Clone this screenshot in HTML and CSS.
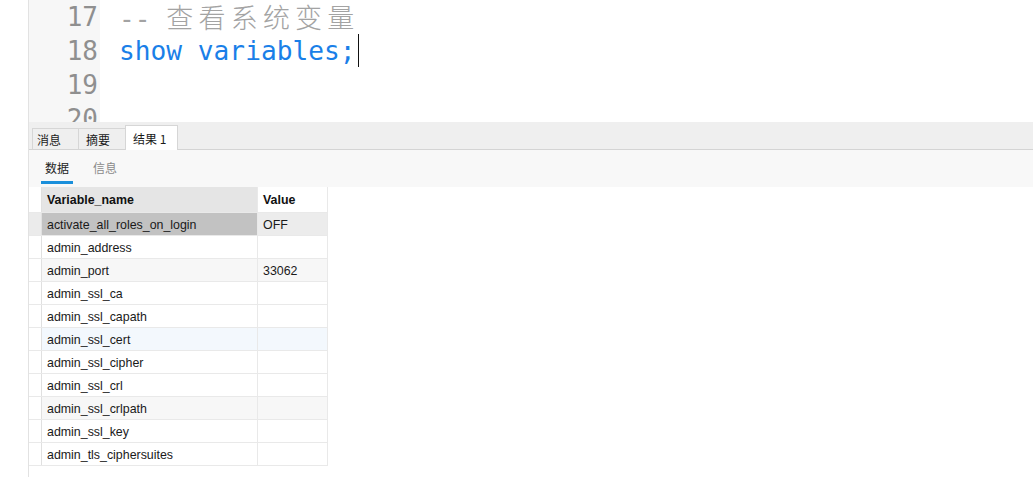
FILE: index.html
```html
<!DOCTYPE html>
<html lang="zh-CN">
<head>
<meta charset="utf-8">
<link rel="stylesheet" href="styles.css">
</head>
<body>
<div class="app">
  <div class="side"></div>
  <div class="main">
    <div class="editor">
      <div class="gutter">
        <div class="ln">17</div>
        <div class="ln">18</div>
        <div class="ln">19</div>
        <div class="ln">20</div>
      </div>
      <div class="code">
        <div class="line comment">-- <span class="cjk">查看系统变量</span></div>
        <div class="line"><span class="kw">show variables;</span><span class="caret"></span></div>
        <div class="line"></div>
        <div class="line"></div>
      </div>
    </div>
    <div class="panel">
      <div class="tabbar">
        <div class="tab t1">消息</div>
        <div class="tab t2">摘要</div>
        <div class="tab active">结果 1</div>
      </div>
      <div class="subtabs">
        <div class="subtab on">数据</div>
        <div class="subtab">信息</div>
      </div>
      <table class="grid">
        <thead>
          <tr><th class="ind"></th><th class="name sel-col">Variable_name</th><th class="val">Value</th></tr>
        </thead>
        <tbody>
          <tr class="cur"><td class="ind"></td><td class="name">activate_all_roles_on_login</td><td class="val">OFF</td></tr>
          <tr><td class="ind"></td><td class="name">admin_address</td><td class="val"></td></tr>
          <tr class="alt"><td class="ind"></td><td class="name">admin_port</td><td class="val">33062</td></tr>
          <tr><td class="ind"></td><td class="name">admin_ssl_ca</td><td class="val"></td></tr>
          <tr><td class="ind"></td><td class="name">admin_ssl_capath</td><td class="val"></td></tr>
          <tr class="hover"><td class="ind"></td><td class="name">admin_ssl_cert</td><td class="val"></td></tr>
          <tr><td class="ind"></td><td class="name">admin_ssl_cipher</td><td class="val"></td></tr>
          <tr><td class="ind"></td><td class="name">admin_ssl_crl</td><td class="val"></td></tr>
          <tr class="alt"><td class="ind"></td><td class="name">admin_ssl_crlpath</td><td class="val"></td></tr>
          <tr><td class="ind"></td><td class="name">admin_ssl_key</td><td class="val"></td></tr>
          <tr><td class="ind"></td><td class="name">admin_tls_ciphersuites</td><td class="val"></td></tr>
        </tbody>
      </table>
    </div>
  </div>
</div>
</body>
</html>
```
FILE: styles.css
```css
html, body {
  margin: 0;
  padding: 0;
  background: #ffffff;
}
body {
  width: 1033px;
  height: 477px;
  overflow: hidden;
  font-family: "Liberation Sans", "Noto Sans CJK SC", sans-serif;
}
.app {
  display: flex;
  height: 477px;
}
.side {
  width: 28px;
  flex: none;
  background: #ffffff;
}
.main {
  flex: 1;
  border-left: 1px solid #e2e2e2;
  display: flex;
  flex-direction: column;
  min-width: 0;
}
.editor {
  height: 122px;
  overflow: hidden;
  display: flex;
  flex: none;
}
.gutter {
  width: 71px;
  flex: none;
  background: #f7f7f7;
  text-align: right;
  box-sizing: border-box;
  padding-right: 2px;
  font-family: "DejaVu Sans Mono", monospace;
  font-size: 26px;
  color: #8f8f8f;
}
.ln, .line {
  height: 34px;
  line-height: 34px;
}
.code {
  flex: 1;
  padding-left: 19px;
  font-family: "DejaVu Sans Mono", "Noto Sans CJK SC", monospace;
  font-size: 26.2px;
}
.line {
  white-space: pre;
}
.comment {
  color: #a3a3a3;
}
.cjk {
  font-family: "Noto Sans CJK SC", sans-serif;
  font-weight: 300;
  font-size: 27px;
  letter-spacing: 5.2px;
}
.kw {
  color: #1a7fe8;
}
.caret {
  display: inline-block;
  width: 1px;
  height: 33px;
  background: #111111;
  vertical-align: top;
  margin-left: 2px;
}
.panel {
  flex: 1;
  display: flex;
  flex-direction: column;
}
.tabbar {
  height: 27px;
  background: #efefef;
  border-bottom: 1px solid #d4d4d4;
  display: flex;
  align-items: flex-end;
  padding-left: 3px;
  flex: none;
}
.tab {
  height: 21px;
  line-height: 21px;
  border: 1px solid #d6d6d6;
  border-bottom: none;
  margin-right: -1px;
  background: #efefef;
  font-size: 12px;
  color: #1a1a1a;
  box-sizing: border-box;
  padding-left: 7px;
  font-family: "Noto Sans CJK SC", sans-serif;
}
.tab.t1 {
  width: 47px;
  padding-left: 4px;
}
.tab.t2 {
  width: 48px;
}
.tab.active {
  background: #ffffff;
  height: 25px;
  line-height: 25px;
  width: 53px;
  margin-bottom: -1px;
  position: relative;
}
.subtabs {
  height: 37px;
  background: #f8f8f8;
  display: flex;
  padding-left: 12px;
  flex: none;
}
.subtab {
  font-family: "Noto Sans CJK SC", sans-serif;
  font-size: 12px;
  color: #8a8a8a;
  line-height: 36px;
  height: 31px;
  margin-right: 16px;
  padding: 0 4px;
}
.subtab.on {
  color: #222222;
  border-bottom: 3px solid #1a8fdb;
}
.grid {
  border-collapse: collapse;
  table-layout: fixed;
  width: 297px;
  font-size: 12.4px;
  color: #1a1a1a;
}
.grid th, .grid td {
  border-right: 1px solid #e9e9e9;
  border-bottom: 1px solid #e9e9e9;
  padding: 0 0 0 5px;
  text-align: left;
  white-space: nowrap;
  overflow: hidden;
}
.grid th {
  height: 25px;
  font-weight: bold;
  font-size: 12.4px;
  background: #ffffff;
  color: #111111;
}
.grid th.sel-col {
  background: #e5e5e5;
}
.grid td {
  height: 21px;
  padding-top: 1px;
}
.grid .ind {
  width: 12px;
  padding: 0;
  border-right: 1px solid #e0e0e0;
}
.grid .name {
  width: 210px;
}
.grid .val {
  width: 64px;
}
.grid tr.cur td.ind {
  background: #ebebeb;
}
.grid tr.cur td.name {
  background: #c2c2c2;
}
.grid tr.cur td.val {
  background: #ececec;
}
.grid tr.alt td {
  background: #f7f7f7;
}
.grid tr.alt td.ind {
  background: #ffffff;
}
.grid tr.hover td {
  background: #f3f8fd;
}
.grid tr.hover td.ind {
  background: #ffffff;
}
```
